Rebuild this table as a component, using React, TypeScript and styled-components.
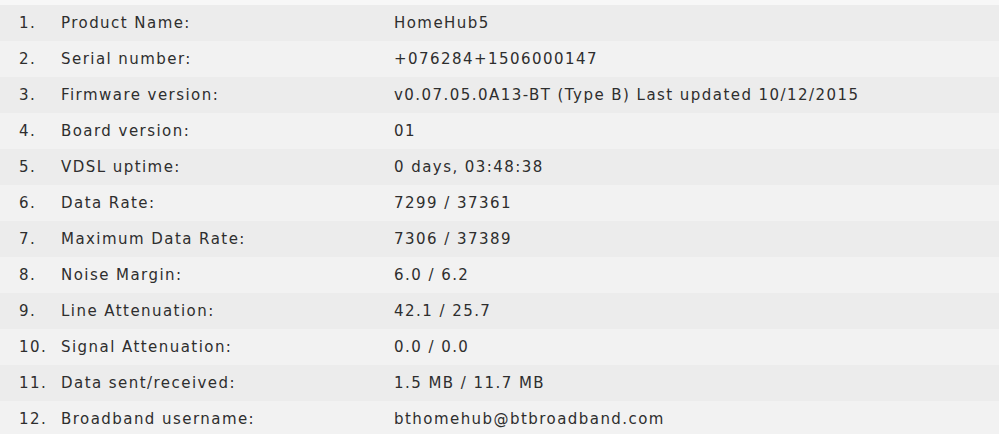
import React from 'react'
import styled, {createGlobalStyle} from 'styled-components'

const rows: [string, string][] = [
  ['Product Name:', 'HomeHub5'],
  ['Serial number:', '+076284+1506000147'],
  ['Firmware version:', 'v0.07.05.0A13-BT (Type B) Last updated 10/12/2015'],
  ['Board version:', '01'],
  ['VDSL uptime:', '0 days, 03:48:38'],
  ['Data Rate:', '7299 / 37361'],
  ['Maximum Data Rate:', '7306 / 37389'],
  ['Noise Margin:', '6.0 / 6.2'],
  ['Line Attenuation:', '42.1 / 25.7'],
  ['Signal Attenuation:', '0.0 / 0.0'],
  ['Data sent/received:', '1.5 MB / 11.7 MB'],
  ['Broadband username:', 'bthomehub@btbroadband.com'],
]

function App() {
  return (
    <>
      <GlobalStyle />
      <Table>
        {rows.map(([label, value], i) => (
          <Row key={label} odd={i % 2 === 0}>
            <Num>{i + 1}.</Num>
            <Label>{label}</Label>
            <Value>{value}</Value>
          </Row>
        ))}
      </Table>
    </>
  )
}

const GlobalStyle = createGlobalStyle`
  body {
    margin: 0;
    background: #f7f7f7;
  }
`

const Table = styled.div`
  padding-top: 5px;
  font-family: 'DejaVu Sans', Verdana, sans-serif;
  font-size: 15px;
  letter-spacing: 1.45px;
  color: #2e2e2e;
`

const Row = styled.div<{odd: boolean}>`
  display: grid;
  grid-template-columns: 61px 333px 1fr;
  align-items: center;
  height: 36px;
  background: ${props => (props.odd ? '#ececec' : '#f2f2f2')};
`

const Num = styled.span`
  padding-left: 19px;
`

const Label = styled.span``

const Value = styled.span``

export default App
